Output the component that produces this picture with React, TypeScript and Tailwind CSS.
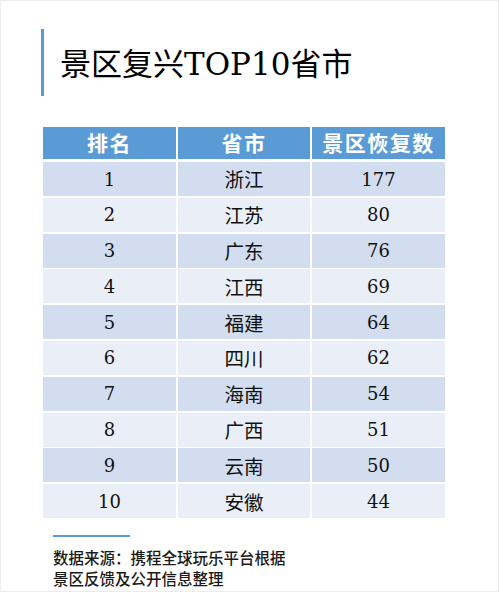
const rows = [
  { rank: "1", city: "浙江", count: "177" },
  { rank: "2", city: "江苏", count: "80" },
  { rank: "3", city: "广东", count: "76" },
  { rank: "4", city: "江西", count: "69" },
  { rank: "5", city: "福建", count: "64" },
  { rank: "6", city: "四川", count: "62" },
  { rank: "7", city: "海南", count: "54" },
  { rank: "8", city: "广西", count: "51" },
  { rank: "9", city: "云南", count: "50" },
  { rank: "10", city: "安徽", count: "44" },
]

const serif = "font-['DejaVu_Serif','Noto_Sans_CJK_SC',serif]"
const cjk = "font-['Noto_Sans_CJK_SC',sans-serif]"

export default function App() {
  return (
    <div className="h-[592px] w-[499px] border border-[#ececec] bg-white">
      {/* Title */}
      <div className="ml-[40px] mt-[28px] flex h-[67px] items-center border-l-[3px] border-[#5b9bd5] pl-[16px]">
        <h1 className="text-[31px] leading-none text-black">
          <span className={cjk}>景区复兴</span>
          <span className={serif}>TOP10</span>
          <span className={cjk}>省市</span>
        </h1>
      </div>

      {/* Table */}
      <div className="ml-[42px] mt-[31px] w-[402px]">
        <div className="grid h-[31px] grid-cols-[133px_132px_133px] gap-x-[2px] bg-white">
          {["排名", "省市", "景区恢复数"].map((h) => (
            <div
              key={h}
              className={`flex items-center justify-center bg-[#5b9bd5] text-[21px] font-bold tracking-[1.5px] text-white ${cjk}`}
            >
              {h}
            </div>
          ))}
        </div>
        <div className="mt-[4px] flex flex-col gap-y-[1.8px]">
          {rows.map((r, i) => (
            <div
              key={r.rank}
              className="grid h-[34px] grid-cols-[133px_132px_133px] gap-x-[2px]"
            >
              {[r.rank, r.city, r.count].map((v, j) => (
                <div
                  key={j}
                  className={`flex items-center justify-center text-[#111] ${
                    i % 2 === 0 ? "bg-[#d2deef]" : "bg-[#eaeff7]"
                  } ${j === 1 ? `text-[19.5px] ${cjk}` : `text-[18px] ${serif}`}`}
                >
                  {v}
                </div>
              ))}
            </div>
          ))}
        </div>
      </div>

      {/* Source */}
      <div className="ml-[52px] mt-[17px] h-[2px] w-[77px] bg-[#5b9bd5]" />
      <div className={`ml-[52px] mt-[10px] text-[15.5px] font-medium leading-[21px] text-[#1a1a1a] ${cjk}`}>
        <p>数据来源：携程全球玩乐平台根据</p>
        <p>景区反馈及公开信息整理</p>
      </div>
    </div>
  )
}
